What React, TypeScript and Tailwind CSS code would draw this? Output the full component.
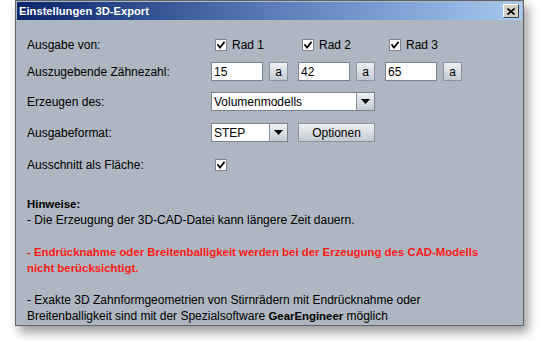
import type { ReactNode } from "react";

const font = { fontFamily: '"Liberation Sans", Arial, sans-serif' };

function Check() {
  return (
    <span className="flex h-[12px] w-[12px] items-center justify-center border border-[#7a8490] bg-white">
      <svg width="8" height="8" viewBox="0 0 8 8">
        <path d="M1 4 L3 6.5 L7 1.5" stroke="#000" strokeWidth="1.8" fill="none" strokeLinecap="square" />
      </svg>
    </span>
  );
}

function Field({ value, w = "w-[52px]" }: { value: string; w?: string }) {
  return (
    <div className={`flex h-[19px] ${w} items-center border border-[#7a8490] bg-white pl-[2px] text-[12px] text-black`}>
      {value}
    </div>
  );
}

function Btn({ children, w = "w-[19px]" }: { children: ReactNode; w?: string }) {
  return (
    <div
      className={`flex h-[19px] ${w} items-center justify-center border border-[#8a949f] bg-gradient-to-b from-[#eef1f4] to-[#c3cad2] text-[12px] text-black`}
    >
      {children}
    </div>
  );
}

function Combo({ value, w }: { value: string; w: string }) {
  return (
    <div className={`flex h-[19px] ${w} border border-[#7a8490] bg-white`}>
      <div className="flex flex-1 items-center pl-[2px] text-[12px] text-black">{value}</div>
      <div className="flex w-[18px] items-center justify-center border-l border-[#8a949f] bg-gradient-to-b from-[#eef1f4] to-[#c3cad2]">
        <svg width="9" height="5" viewBox="0 0 9 5">
          <path d="M0 0 H9 L4.5 5 Z" fill="#000" />
        </svg>
      </div>
    </div>
  );
}

function Row({ label, children, mt }: { label: string; children: ReactNode; mt: string }) {
  return (
    <div className={`flex h-[19px] items-center ${mt}`}>
      <div className="w-[184px] text-[12px] text-black">{label}</div>
      <div className="flex items-center">{children}</div>
    </div>
  );
}

export default function App() {
  return (
    <div className="h-[341px] w-[541px] bg-white pl-[15px]" style={font}>
      <div className="h-[326px] w-[509px] border border-[#5e646b] bg-[#adb6c1] shadow-[4px_6px_10px_rgba(0,0,0,0.4)]">
        <div className="mx-[1px] mt-[1px] flex h-[18px] items-center justify-between bg-gradient-to-r from-[#0a246a] via-[#5a7bb8] to-[#a6caf0] pl-[2px] pr-[2px]">
          <span className="text-[11.2px] font-bold text-white">Einstellungen 3D-Export</span>
          <div className="mr-[1px] flex h-[14px] w-[16px] items-center justify-center border border-t-white border-l-white border-r-[#404040] border-b-[#404040] bg-[#d4d0c8]">
            <svg width="8" height="7" viewBox="0 0 8 7">
              <path d="M0.5 0.5 L7.5 6.5 M7.5 0.5 L0.5 6.5" stroke="#000" strokeWidth="1.6" />
            </svg>
          </div>
        </div>

        <div className="flex flex-col pl-[11px]">
          <Row label="Ausgabe von:" mt="mt-[15px]">
            <div className="flex w-[87px] items-center gap-[5px] pl-[4px]">
              <Check />
              <span className="text-[12px] text-black">Rad 1</span>
            </div>
            <div className="flex w-[87px] items-center gap-[5px] pl-[4px]">
              <Check />
              <span className="text-[12px] text-black">Rad 2</span>
            </div>
            <div className="flex items-center gap-[5px] pl-[4px]">
              <Check />
              <span className="text-[12px] text-black">Rad 3</span>
            </div>
          </Row>
          <Row label="Auszugebende Zähnezahl:" mt="mt-[8px]">
            <Field value="15" />
            <div className="ml-[6px]"><Btn>a</Btn></div>
            <div className="ml-[10px]"><Field value="42" /></div>
            <div className="ml-[6px]"><Btn>a</Btn></div>
            <div className="ml-[10px]"><Field value="65" /></div>
            <div className="ml-[6px]"><Btn>a</Btn></div>
          </Row>
          <Row label="Erzeugen des:" mt="mt-[11px]">
            <Combo value="Volumenmodells" w="w-[164px]" />
          </Row>
          <Row label="Ausgabeformat:" mt="mt-[12px]">
            <Combo value="STEP" w="w-[77px]" />
            <div className="ml-[10px]"><Btn w="w-[77px]">Optionen</Btn></div>
          </Row>
          <Row label="Ausschnitt als Fläche:" mt="mt-[13px]">
            <div className="pl-[4px]"><Check /></div>
          </Row>

          <div className="mt-[22px] text-[12px] leading-[16px] text-black">
            <div className="text-[11.4px] font-bold">Hinweise:</div>
            <div>- Die Erzeugung der 3D-CAD-Datei kann längere Zeit dauern.</div>
            <div className="h-[16px]" />
            <div className="text-[11.4px] font-bold text-[#ff1a1a]">
              - Endrücknahme oder Breitenballigkeit werden bei der Erzeugung des CAD-Modells
              <br />
              nicht berücksichtigt.
            </div>
            <div className="h-[16px]" />
            <div>- Exakte 3D Zahnformgeometrien von Stirnrädern mit Endrücknahme oder</div>
            <div>
              Breitenballigkeit sind mit der Spezialsoftware{" "}
              <span className="text-[11.4px] font-bold">GearEngineer</span> möglich
            </div>
          </div>
        </div>
      </div>
    </div>
  );
}
